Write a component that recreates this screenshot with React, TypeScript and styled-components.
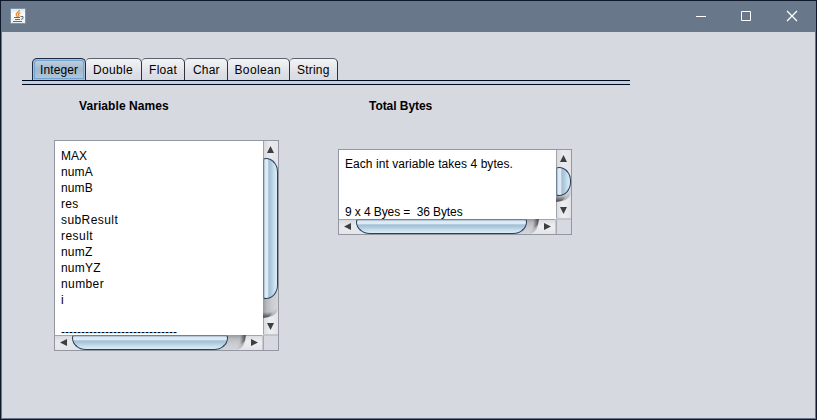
import React from 'react';
import styled, { createGlobalStyle, css } from 'styled-components';

const Global = createGlobalStyle`
  * { box-sizing: border-box; }
  body { margin: 0; overflow: hidden; }
`;

const Frame = styled.div`
  width: 817px;
  height: 420px;
  padding: 1px;
  background: #0d182b;
`;

const Body = styled.div`
  height: 418px;
  border: 1px solid #69778a;
  background: #d6d9e0;
  font: 12px/16px 'Liberation Sans', Arial, sans-serif;
  color: #000;
`;

const TitleBar = styled.header`
  height: 30px;
  background: #69778a;
  display: flex;
  justify-content: space-between;
  padding: 0 0 0 8px;
`;

const AppIcon = styled.svg`
  display: block;
  margin-top: 6px;
`;

const Controls = styled.div`
  display: flex;
`;

const ControlButton = styled.button`
  width: 46px;
  height: 28px;
  border: 0;
  padding: 0;
  background: transparent;
  display: flex;
  align-items: center;
  justify-content: center;
`;

const Content = styled.main`
  padding: 26px 0 0 20px;
`;

const Tabs = styled.nav`
  display: flex;
  height: 22px;
  padding-left: 10px;
`;

const Tab = styled.div<{ $w: number; $pad: number; $spacing: number; $active?: boolean }>`
  width: ${p => p.$w}px;
  height: 22px;
  padding-left: ${p => p.$pad}px;
  letter-spacing: ${p => p.$spacing}px;
  border: 1px solid #5d626d;
  border-bottom: 0;
  border-left: 0;
  border-right-color: #30333e;
  border-radius: 4px 5px 0 0;
  background: linear-gradient(#f3f4f7, #dcdfe5 70%, #d8dbe2);
  line-height: 22px;
  white-space: nowrap;
  ${p =>
    p.$active &&
    css`
      border: 1px solid #1d2c45;
      border-bottom: 0;
      border-radius: 5px 5px 0 0;
      background: linear-gradient(#c4d2e0, #a2b8cd 50%, #b2c8dc);
      box-shadow: inset 0 0 0 1px #a5c0d9, inset 0 0 0 2px #73a4d1;
    `}
`;

const TabRule = styled.div`
  width: 608px;
  height: 5px;
  border-top: 1px solid #04081c;
  border-bottom: 1px solid #04081c;
  background: #b9d3e3;
`;

const Columns = styled.div`
  display: flex;
  align-items: flex-start;
  padding: 13px 0 0 32px;
`;

const Column = styled.section<{ $w: number }>`
  width: ${p => p.$w}px;
`;

const Heading = styled.h2<{ $indent: number; $gap: number; $spacing: number }>`
  margin: 0 0 ${p => p.$gap}px ${p => p.$indent}px;
  font-size: 12px;
  line-height: 16px;
  font-weight: bold;
  letter-spacing: ${p => p.$spacing}px;
`;

const Pane = styled.div<{ $w: number; $h: number }>`
  width: ${p => p.$w}px;
  height: ${p => p.$h}px;
  border: 1px solid #9297a1;
  display: grid;
  grid-template-columns: 1fr 15px;
  grid-template-rows: 1fr 15px;
`;

const Viewport = styled.div<{ $top: number }>`
  padding: ${p => p.$top}px 0 0 6px;
  overflow: hidden;
  min-height: 0;
  min-width: 0;
  background: #fff;
`;

const Line = styled.div<{ $spacing: number }>`
  height: 16px;
  line-height: 16px;
  white-space: pre;
  letter-spacing: ${p => p.$spacing}px;
`;

const Corner = styled.div`
  border-left: 1px solid #a5a9b2;
  border-top: 1px solid #c2c5cc;
`;

const Bar = styled.div<{ $v?: boolean }>`
  display: flex;
  flex-direction: ${p => (p.$v ? 'column' : 'row')};
  justify-content: space-between;
  min-width: 0;
  min-height: 0;
  overflow: hidden;
  background: linear-gradient(${p => (p.$v ? '90deg' : '180deg')}, #96989e, #b9bbc1 25%, #cbcdd2 60%, #d4d6db);
`;

const ArrowBox = styled.div<{ $v?: boolean; $size: number }>`
  flex: none;
  width: ${p => (p.$v ? 15 : p.$size)}px;
  height: ${p => (p.$v ? p.$size : 15)}px;
`;

/* The thumb lies over the rounded edges of both arrow buttons. */
const ThumbSlot = styled.div<{ $v?: boolean; $len: number }>`
  flex: none;
  position: relative;
  z-index: 1;
  ${p =>
    p.$v
      ? `margin-top: -14px; margin-bottom: -${Math.min(30, p.$len)}px;`
      : `margin-left: -14px; margin-right: -30px;`}
`;

const Thumb = styled.div<{ $v?: boolean; $len: number }>`
  width: ${p => (p.$v ? 15 : p.$len)}px;
  height: ${p => (p.$v ? p.$len : 15)}px;
  border: 1px solid #29405a;
  ${p =>
    p.$v
      ? 'border-left-color: #6d8296; border-radius: 3px 12px 12px 3px / 2px 14px 14px 2px;'
      : 'border-top-color: #6d8296; border-radius: 2px 2px 14px 14px / 3px 3px 12px 12px;'}
  background: linear-gradient(
    ${p => (p.$v ? '90deg' : '180deg')},
    #9db6cc 0, #d9e6f0 10%, #e4eef6 26%, #a3bed5 38%, #b0cade 55%, #cbe1ef 80%, #dcedf6
  );
`;

const ARROWS = {
  up: '7.5,5 11,12 4,12',
  down: '4,4.5 11,4.5 7.5,11.5',
};

/* Horizontal bars reuse the vertical drawing, mirrored over its diagonal. */
function StartArrow({ v, size }: { v?: boolean; size: number }) {
  const id = v ? 'sv' : 'sh';
  return (
    <ArrowBox $v={v} $size={size}>
      <svg width={v ? 15 : size} height={v ? size : 15} display="block">
        <defs>
          <linearGradient id={id} x2="1">
            <stop offset="0" stopColor="#d4d6da" />
            <stop offset=".45" stopColor="#e9eaed" />
            <stop offset="1" stopColor="#e3e5e9" />
          </linearGradient>
        </defs>
        <g transform={v ? undefined : 'matrix(0 1 1 0 0 0)'}>
          <rect width="15" height="30" fill={`url(#${id})`} />
          <path d="M.5 0V30" stroke="#a1a4ac" />
          <polygon points={ARROWS.up} fill="#3c3e42" />
        </g>
      </svg>
    </ArrowBox>
  );
}

function EndArrow({ v }: { v?: boolean }) {
  const id = v ? 'ev' : 'eh';
  return (
    <ArrowBox $v={v} $size={36}>
      <svg width={v ? 15 : 36} height={v ? 36 : 15} display="block">
        <defs>
          <linearGradient id={id} x2="1">
            <stop offset="0" stopColor="#d8dadd" />
            <stop offset=".45" stopColor="#eeeff1" />
            <stop offset="1" stopColor="#e2e4e8" />
          </linearGradient>
          <linearGradient id={id + 's'} x2=".7" y2="1">
            <stop offset=".35" stopColor="#55575d" stopOpacity="0" />
            <stop offset="1" stopColor="#55575d" stopOpacity=".35" />
          </linearGradient>
          <linearGradient id={id + 'd'} x2="0" y2="1">
            <stop offset="0" stopColor="#3c3e44" stopOpacity="0" />
            <stop offset="1" stopColor="#3c3e44" stopOpacity=".9" />
          </linearGradient>
        </defs>
        <g transform={v ? undefined : 'matrix(0 1 1 0 0 0)'}>
          <path d="M0 10H15V12Q12 19 0 19Z" fill={`url(#${id}s)`} />
          <path d="M0 13H10Q7 19 0 19Z" fill={`url(#${id}d)`} />
          <path d="M15 10Q13 18.5 0 19V36H15Z" fill={`url(#${id})`} />
          <path d="M.5 19V36" stroke="#a1a4ac" />
          <path d="M0 35.5H15" stroke="#c5c8cd" />
          <polygon points={ARROWS.down} transform="translate(0 19.5)" fill="#3c3e42" />
        </g>
      </svg>
    </ArrowBox>
  );
}

function ScrollBar({ v, start, thumb }: { v?: boolean; start: number; thumb: number }) {
  return (
    <Bar $v={v}>
      <Leading $v={v}>
        <StartArrow v={v} size={start + 14} />
        <ThumbSlot $v={v} $len={thumb}>
          <Thumb $v={v} $len={thumb} />
        </ThumbSlot>
      </Leading>
      <EndArrow v={v} />
    </Bar>
  );
}

const Leading = styled.div<{ $v?: boolean }>`
  display: flex;
  flex: none;
  flex-direction: ${p => (p.$v ? 'column' : 'row')};
`;

const NAMES: [string, number][] = [
  ['MAX', 0],
  ['numA', 0.1],
  ['numB', 0.1],
  ['res', 0.3],
  ['subResult', 0.42],
  ['result', 0.45],
  ['numZ', 0.2],
  ['numYZ', 0.2],
  ['number', 0.4],
  ['i', 0],
  ['', 0],
  ['-----------------------------', 0],
];

const BYTES: [string, number][] = [
  ['Each int variable takes 4 bytes.', 0.06],
  ['', 0],
  ['', 0],
  ['9 x 4 Byes =  36 Bytes', -0.1],
];

const TABS: { label: string; w: number; pad: number; spacing: number }[] = [
  { label: 'Integer', w: 54, pad: 7, spacing: 0.1 },
  { label: 'Double', w: 56, pad: 7, spacing: 0.32 },
  { label: 'Float', w: 43, pad: 7, spacing: 0.3 },
  { label: 'Char', w: 43, pad: 8, spacing: 0.2 },
  { label: 'Boolean', w: 62, pad: 6.5, spacing: 0.35 },
  { label: 'String', w: 48, pad: 7, spacing: 0.2 },
];

export default function App() {
  return (
    <Frame>
      <Global />
      <Body>
        <TitleBar>
          <AppIcon width="16" height="16" viewBox="0 0 16 16" fill="none">
            <defs>
              <linearGradient id="tile" x2="0" y2="1">
                <stop stopColor="#dfe5e9" />
                <stop offset=".4" stopColor="#fff" />
                <stop offset="1" stopColor="#e8ebed" />
              </linearGradient>
            </defs>
            <rect x=".5" y=".5" width="15" height="15" rx="1" fill="url(#tile)" stroke="#7896a9" />
            <path d="M9.5 2C9.5 4 6 4.5 6.2 6.5C6.3 7.5 7.3 8 7.3 9M10.3 4.6C8.5 5.3 8 6 8.8 7C9.2 7.6 9 8.2 8.4 8.8" stroke="#ee8a2b" strokeWidth="1.4" />
            <path d="M4 9.5H10M5 11.5H10M3 13.5H12M10.5 8.5H13V10.5L11 11.5" stroke="#527087" />
          </AppIcon>
          <Controls>
            {['M4 8.5H14', 'M3.5 3.5H12.5V12.5H3.5Z', 'M3 3L13 13M13 3L3 13'].map(d => (
              <ControlButton key={d}>
                <svg width="16" height="16" fill="none" stroke="#fff">
                  <path d={d} strokeWidth={d.startsWith('M3 3L') ? 1.3 : 1} />
                </svg>
              </ControlButton>
            ))}
          </Controls>
        </TitleBar>
        <Content>
          <Tabs>
            {TABS.map((t, i) => (
              <Tab key={t.label} $w={t.w} $pad={t.pad} $spacing={t.spacing} $active={i === 0}>
                {t.label}
              </Tab>
            ))}
          </Tabs>
          <TabRule />
          <Columns>
            <Column $w={284}>
              <Heading $indent={25} $gap={26} $spacing={0.08}>Variable Names</Heading>
              <Pane $w={225} $h={211}>
                <Viewport $top={7}>
                  {NAMES.map(([text, s], i) => (
                    <Line key={i} $spacing={s}>{text}</Line>
                  ))}
                </Viewport>
                <ScrollBar v start={17} thumb={141} />
                <ScrollBar start={17} thumb={156} />
                <Corner />
              </Pane>
            </Column>
            <Column $w={234}>
              <Heading $indent={31} $gap={35} $spacing={-0.05}>Total Bytes</Heading>
              <Pane $w={234} $h={86}>
                <Viewport $top={6}>
                  {BYTES.map(([text, s], i) => (
                    <Line key={i} $spacing={s}>{text}</Line>
                  ))}
                </Viewport>
                <ScrollBar v start={17} thumb={29} />
                <ScrollBar start={17} thumb={171} />
                <Corner />
              </Pane>
            </Column>
          </Columns>
        </Content>
      </Body>
    </Frame>
  );
}
